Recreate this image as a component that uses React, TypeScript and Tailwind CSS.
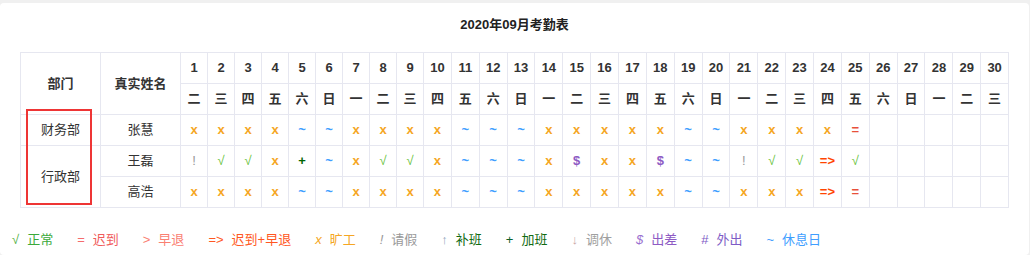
import React from "react";

type Mark = "x" | "~" | "=" | "=>" | "√" | "!" | "+" | "$" | "";

const weekdays = ["日", "一", "二", "三", "四", "五", "六"];

// 2020-09-01 是星期二
const days = Array.from({ length: 30 }, (_, i) => ({
  day: i + 1,
  week: weekdays[(i + 2) % 7],
}));

const parse = (s: string): Mark[] => {
  const list = s.split(" ") as Mark[];
  while (list.length < 30) list.push("");
  return list;
};

const rows = [
  {
    dept: "财务部",
    span: 1,
    name: "张慧",
    marks: parse("x x x x ~ ~ x x x x ~ ~ ~ x x x x x ~ ~ x x x x ="),
  },
  {
    dept: "行政部",
    span: 2,
    name: "王磊",
    marks: parse("! √ √ x + ~ x √ √ x ~ ~ ~ x $ x x $ ~ ~ ! √ √ => √"),
  },
  {
    dept: "",
    span: 0,
    name: "高浩",
    marks: parse("x x x x ~ ~ x x x x ~ ~ ~ x x x x x ~ ~ x x x => ="),
  },
];

const markClass: Record<string, string> = {
  x: "text-[#f5a623] font-bold",
  "~": "text-[#409eff] font-bold",
  "=": "text-[#e8503a] font-bold",
  "=>": "text-[#ff4500] font-bold",
  "√": "text-[#67c23a]",
  "!": "text-[#999999]",
  "+": "text-[#006400] font-bold",
  $: "text-[#8e5bc4] font-bold",
  "": "",
};

const legend = [
  { sym: "√", label: "正常", sc: "text-[#52b043]", lc: "text-[#3aa93a]" },
  { sym: "=", label: "迟到", sc: "text-[#f56c6c]", lc: "text-[#f05b5b]" },
  { sym: ">", label: "早退", sc: "text-[#fa8072]", lc: "text-[#fa8072]" },
  { sym: "=>", label: "迟到+早退", sc: "text-[#ff5722]", lc: "text-[#ff5722]" },
  { sym: "x", label: "旷工", sc: "text-[#f5a623] italic", lc: "text-[#f5a623]" },
  { sym: "!", label: "请假", sc: "text-[#999999] italic", lc: "text-[#999999]" },
  { sym: "↑", label: "补班", sc: "text-[#8fa3b8]", lc: "text-[#126b12]" },
  { sym: "+", label: "加班", sc: "text-[#0b5f2a]", lc: "text-[#126b12]" },
  { sym: "↓", label: "调休", sc: "text-[#c9a7a7]", lc: "text-[#a0a0a0]" },
  { sym: "$", label: "出差", sc: "text-[#9a6fd0] italic", lc: "text-[#8e5bc4]" },
  { sym: "#", label: "外出", sc: "text-[#7e5cc6]", lc: "text-[#7e5cc6]" },
  { sym: "~", label: "休息日", sc: "text-[#409eff]", lc: "text-[#409eff]" },
];

const cell = "border border-[#e6e7f0] p-0 text-center";

export default function App() {
  return (
    <div className="min-h-[255px] bg-[#f0f0f0] pt-[3px] font-['Liberation_Sans','Noto_Sans_CJK_SC',sans-serif] text-[13px] text-[#333]">
      <div className="relative w-[1029px] min-h-[252px] rounded-[4px] bg-white px-[20px] pt-[12px]">
        <h1 className="h-[20px] text-center text-[13px] font-bold leading-[20px] text-[#222]">
          2020年09月考勤表
        </h1>

        <table className="mt-[17px] w-full table-fixed border-collapse">
          <colgroup>
            <col className="w-[80px]" />
            <col className="w-[80px]" />
            {days.map((d) => (
              <col key={d.day} className={d.day < 10 ? "w-[27px]" : "w-[27.86px]"} />
            ))}
          </colgroup>
          <thead>
            <tr className="h-[31px]">
              <th rowSpan={2} className={cell + " font-bold"}>
                部门
              </th>
              <th rowSpan={2} className={cell + " font-bold"}>
                真实姓名
              </th>
              {days.map((d) => (
                <th key={d.day} className={cell + " font-bold"}>
                  {d.day}
                </th>
              ))}
            </tr>
            <tr className="h-[31px]">
              {days.map((d) => (
                <th key={d.day} className={cell + " font-bold"}>
                  {d.week}
                </th>
              ))}
            </tr>
          </thead>
          <tbody>
            {rows.map((r) => (
              <tr key={r.name} className="h-[31px]">
                {r.span > 0 && (
                  <td rowSpan={r.span} className={cell}>
                    {r.dept}
                  </td>
                )}
                <td className={cell}>{r.name}</td>
                {r.marks.map((m, i) => (
                  <td key={i} className={cell + " " + markClass[m]}>
                    {m}
                  </td>
                ))}
              </tr>
            ))}
          </tbody>
        </table>

        {/* 标注框 */}
        <div className="absolute left-[26px] top-[106px] h-[96px] w-[66px] border-2 border-[#ee3535]" />

        <div className="-ml-[8px] mt-[22px] flex h-[20px] items-center gap-[24px] leading-[20px]">
          {legend.map((l) => (
            <span key={l.label} className="flex items-center gap-[8px]">
              <span className={l.sc}>{l.sym}</span>
              <span className={l.lc}>{l.label}</span>
            </span>
          ))}
        </div>
      </div>
    </div>
  );
}
